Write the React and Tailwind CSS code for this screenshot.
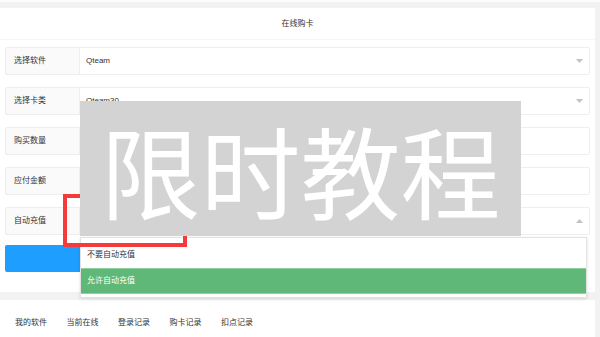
import React from 'react';

const rows = [
  { label: '选择软件', value: 'Qteam', kind: 'select' },
  { label: '选择卡类', value: 'Qteam30', kind: 'select' },
  { label: '购买数量', value: '', kind: 'input' },
  { label: '应付金额', value: '', kind: 'input' },
  { label: '自动充值', value: '', kind: 'open' },
];

const tabs = ['我的软件', '当前在线', '登录记录', '购卡记录', '扣点记录'];

function Caret({ up }) {
  return (
    <svg width="7" height="4" viewBox="0 0 7 4" className="absolute right-[6px] top-1/2 -translate-y-1/2">
      {up ? <path d="M0 4 L3.5 0 L7 4 Z" fill="#c2c2c2" /> : <path d="M0 0 L3.5 4 L7 0 Z" fill="#c2c2c2" />}
    </svg>
  );
}

export default function App() {
  return (
    <div
      className="relative w-[600px] h-[337px] overflow-hidden bg-[#f2f2f2] text-[#333]"
      style={{ fontFamily: '"Liberation Sans", "Noto Sans CJK SC", sans-serif' }}
    >
      {/* top strip */}
      <div className="h-[2px] bg-[#fbfbfb]" />
      <div className="h-[6px]" />

      {/* card */}
      <div className="w-[595px] h-[284px] bg-white">
        <div className="h-[32px] flex items-center justify-center border-b border-[#f6f6f6] text-[8px]">
          在线购卡
        </div>

        <div className="px-[5px] pt-[7px]">
          {rows.map((r) => (
            <div key={r.label} className="flex h-[28px] mb-[12px] text-[8px]">
              <div className="w-[75px] flex items-center pl-[8px] bg-[#fafafa] border border-[#eeeeee] rounded-l-[2px]">
                {r.label}
              </div>
              <div className="relative flex-1 flex items-center pl-[6px] border border-l-0 border-[#eeeeee] rounded-r-[2px]">
                {r.value}
                {r.kind === 'select' && <Caret />}
                {r.kind === 'open' && <Caret up />}
              </div>
            </div>
          ))}

          <div className="-mt-[2px] h-[27px] w-[582px] bg-[#1e9fff] rounded-[2px] border-r-[2px] border-[#9fd4ff]" />
        </div>
      </div>

      {/* bottom tabs */}
      <div className="mt-[8px] w-[595px] h-[37px] bg-white flex items-center gap-[19.5px] pl-[15px] pt-[8px] text-[8px]">
        {tabs.map((t) => (
          <span key={t}>{t}</span>
        ))}
      </div>

      {/* open dropdown */}
      <div className="absolute left-[80px] top-[237px] w-[507px] bg-white border border-[#e2e2e2] shadow-[0_1px_3px_rgba(0,0,0,0.12)] py-[3px] text-[8px]">
        <div className="h-[27px] flex items-center pl-[6px]">不要自动充值</div>
        <div className="h-[26px] flex items-center pl-[6px] bg-[#5fb878] text-white border-y border-[#8fd19e]">允许自动充值</div>
      </div>

      {/* red highlight */}
      <div className="absolute left-[63px] top-[194px] w-[124px] h-[53px] border-[4px] border-[#f53a3a]" />

      {/* overlay banner */}
      <div
        className="absolute left-[80px] top-[101px] w-[441px] h-[135px] bg-[#d3d3d3] flex items-center justify-center text-white text-[100px] leading-none"
        style={{ fontFamily: '"Noto Sans CJK SC", sans-serif' }}
      >
        限时教程
      </div>
    </div>
  );
}
